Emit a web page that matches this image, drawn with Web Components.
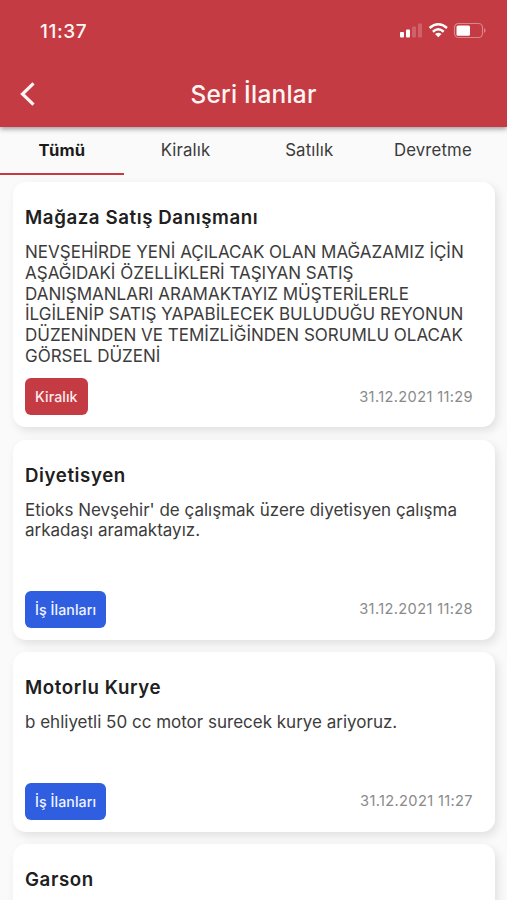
<!DOCTYPE html>
<html lang="tr">
<head>
<meta charset="utf-8">
<title>Seri İlanlar</title>
<style>
html,body{margin:0;height:900px;overflow:hidden;background:#fafafa}
</style>
</head>
<body>
<classifieds-app></classifieds-app>
<script>
const define = (name, html) => {
  const t = document.createElement('template');
  t.innerHTML = html;
  customElements.define(name, class extends HTMLElement {
    constructor() {
      super();
      this.attachShadow({mode: 'open'}).append(t.content.cloneNode(true));
    }
  });
};

define('status-bar', `
<style>
:host{display:flex;align-items:center;justify-content:space-between;height:62px;padding:0 20px 0 40px;box-sizing:border-box}
time{font-size:19px;font-weight:500;letter-spacing:.6px;line-height:24px;padding-top:1px}
svg{display:block}
</style>
<time><slot></slot></time>
<svg width="88" height="18" viewBox="0 0 88 18" fill="#fff">
  <rect x="1" y="10" width="4" height="5.5" rx="1"/>
  <rect x="7" y="7.5" width="4" height="8" rx="1"/>
  <rect x="13" y="4.5" width="4" height="11" rx="1" opacity=".2"/>
  <rect x="19" y="1.5" width="4" height="14" rx="1" opacity=".2"/>
  <path fill="none" stroke="#fff" stroke-width="2.5" d="M30.6 6Q39.3-1.4 48 6M33.9 9.7Q39.3 4.9 44.7 9.7"/>
  <path d="M36.1 12Q39.3 9.3 42.5 12L39.3 15.2Z"/>
  <rect x="55.5" y="1.5" width="28" height="14" rx="4" fill="none" stroke="#fff" stroke-width="1.2" opacity=".38"/>
  <rect x="57.5" y="3.5" width="13.5" height="10.2" rx="1.5"/>
  <path d="M85.2 6Q88 8.5 85.2 11Z" opacity=".45"/>
</svg>`);

define('app-header', `
<style>
:host{display:block;position:relative;z-index:1;height:127px;background:#c43b43;color:#fff5f3;box-shadow:0 2px 5px rgba(0,0,0,.38)}
.bar{display:grid;grid-template-columns:56px 1fr 56px;align-items:center;height:64px}
h1{margin:0;text-align:center;font-size:24.4px;font-weight:500;line-height:30px;letter-spacing:.25px}
svg{display:block;margin-left:19px}
</style>
<status-bar>11:37</status-bar>
<div class="bar">
<svg width="18" height="26" viewBox="0 0 18 26"><path d="M14.5 2.4L3.5 13L14.5 23.6" fill="none" stroke="#fff5f3" stroke-width="3.2"/></svg>
<h1><slot></slot></h1></div>`);

define('tab-bar', `
<style>:host{display:grid;grid-template-columns:repeat(4,123.7px);height:48px;margin-bottom:1px}</style><slot></slot>`);

define('tab-item', `
<style>
:host{display:block;text-align:center;font-size:16.8px;line-height:22px;padding-top:12px;color:#3b3b3b;letter-spacing:.15px;border-bottom:2px solid transparent}
:host([active]){font-size:16.6px;font-weight:700;color:#1c1c1c;border-color:#c43b43}
</style><slot></slot>`);

define('category-tag', `
<style>
:host{display:block;box-sizing:border-box;height:37px;padding:0 10px;border-radius:6px;background:#2f5fe0;color:#f1f4ff;font-size:14.2px;font-weight:500;line-height:37px;letter-spacing:.08px}
:host([kind=rent]){background:#c43b43;color:#ffeceb}
</style><slot></slot>`);

define('listing-card', `
<style>
:host{display:flex;flex-direction:column;box-sizing:border-box;height:var(--h);padding:23px 22px 12px 12px;border-radius:13px;background:#fff;box-shadow:3px 4px 10px rgba(0,0,0,.1)}
h2{margin:0;font-size:18.7px;font-weight:600;line-height:26px;color:#202020;white-space:nowrap;letter-spacing:.58px}
p{margin:11px 0 0;font-size:17px;line-height:20.75px;color:#3c3c3c;white-space:nowrap}
footer{display:flex;justify-content:space-between;align-items:center;margin-top:auto;font-size:14.6px;line-height:20px;color:#8a8a8a}
::slotted([slot=date]){letter-spacing:.36px}
</style>
<h2><slot name="title"></slot></h2>
<p><slot></slot></p>
<footer><slot name="tag"></slot><slot name="date"></slot></footer>`);

define('classifieds-app', `
<style>
:host{display:block;height:900px;overflow:hidden;background:#fafafa;font-family:Inter,"Liberation Sans",sans-serif}
main{display:flex;flex-direction:column;gap:12.3px;padding:6px 12px 0 13px}
listing-card{flex:none}
</style>
<app-header>Seri İlanlar</app-header>
<tab-bar><tab-item active>Tümü</tab-item><tab-item>Kiralık</tab-item><tab-item>Satılık</tab-item><tab-item>Devretme</tab-item></tab-bar>
<main>
<listing-card style="--h:245.3px"><span slot="title">Mağaza Satış Danışmanı</span>NEVŞEHİRDE YENİ AÇILACAK OLAN MAĞAZAMIZ İÇİN<br>AŞAĞIDAKİ ÖZELLİKLERİ TAŞIYAN SATIŞ<br>DANIŞMANLARI ARAMAKTAYIZ MÜŞTERİLERLE<br>İLGİLENİP SATIŞ YAPABİLECEK BULUDUĞU REYONUN<br>DÜZENİNDEN VE TEMİZLİĞİNDEN SORUMLU OLACAK<br>GÖRSEL DÜZENİ<category-tag slot="tag" kind="rent">Kiralık</category-tag><span slot="date">31.12.2021 11:29</span></listing-card>
<listing-card style="--h:200.3px"><span slot="title">Diyetisyen</span>Etioks Nevşehir' de çalışmak üzere diyetisyen çalışma<br>arkadaşı aramaktayız.<category-tag slot="tag">İş İlanları</category-tag><span slot="date">31.12.2021 11:28</span></listing-card>
<listing-card style="--h:179.7px"><span slot="title">Motorlu Kurye</span>b ehliyetli 50 cc motor surecek kurye ariyoruz.<category-tag slot="tag">İş İlanları</category-tag><span slot="date">31.12.2021 11:27</span></listing-card>
<listing-card style="--h:200px"><span slot="title">Garson</span></listing-card>
</main>`);
</script>
</body>
</html>
